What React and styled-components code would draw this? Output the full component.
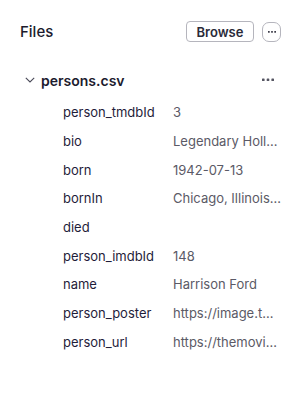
import React from "react";
import styled, { createGlobalStyle } from "styled-components";

const GlobalStyle = createGlobalStyle`
  body {
    margin: 0;
    background: #fff;
    font-family: Inter, "Noto Sans", sans-serif;
    color: #1c1b2e;
  }
`;

const Panel = styled.div`
  width: 303px;
  height: 412px;
  padding: 21px 20px 0 20px;
  box-sizing: border-box;
`;

const Header = styled.div`
  display: flex;
  align-items: center;
  justify-content: space-between;
  height: 21px;
`;

const Title = styled.h2`
  margin: 0;
  font-size: 15px;
  font-weight: 500;
  color: #1c1b2e;
`;

const Actions = styled.div`
  display: flex;
  align-items: center;
  gap: 8px;
  margin-right: 2px;
`;

const Button = styled.button`
  height: 21px;
  width: 68px;
  padding: 0;
  border: 1px solid #b5b5bd;
  border-radius: 4px;
  background: #fff;
  font-family: inherit;
  font-size: 13px;
  font-weight: 600;
  color: #2a2a38;
`;

const IconButton = styled.button`
  width: 19px;
  height: 20px;
  padding: 0;
  border: 1px solid #b5b5bd;
  border-radius: 7px;
  background: #fff;
  display: flex;
  align-items: center;
  justify-content: center;
  color: #2a2a38;
`;

const FileRow = styled.div`
  display: flex;
  align-items: center;
  margin-top: 28px;
  padding-left: 5px;
  height: 20px;
`;

const FileName = styled.span`
  flex: 1;
  margin-left: 6px;
  font-size: 14px;
  font-weight: 600;
  color: #1c1b2e;
`;

const RowMenu = styled.span`
  display: flex;
  margin-right: 9px;
  color: #555562;
`;

const Fields = styled.div`
  margin-top: 8px;
  padding-left: 43px;
  display: flex;
  flex-direction: column;
`;

const Field = styled.div`
  display: grid;
  grid-template-columns: 110px 110px;
  align-items: center;
  height: 28.7px;
  font-size: 13px;
`;

const Key = styled.span`
  color: #1f1d3a;
  white-space: nowrap;
`;

const Value = styled.span`
  color: #5b5a66;
  white-space: nowrap;
  overflow: hidden;
  text-overflow: ellipsis;
`;

const Dots = ({ size = 12 }) => (
  <svg width={size} height="4" viewBox="0 0 12 4" fill="currentColor">
    <rect x="0" y="0.5" width="2.6" height="2.6" rx="0.6" />
    <rect x="4.7" y="0.5" width="2.6" height="2.6" rx="0.6" />
    <rect x="9.4" y="0.5" width="2.6" height="2.6" rx="0.6" />
  </svg>
);

const Chevron = () => (
  <svg width="10" height="6" viewBox="0 0 10 6" fill="none" stroke="#4a4a58" strokeWidth="1.1">
    <path d="M0.8 0.8 L5 5 L9.2 0.8" />
  </svg>
);

const fields = [
  ["person_tmdbId", "3"],
  ["bio", "Legendary Hollywood actor"],
  ["born", "1942-07-13"],
  ["bornIn", "Chicago, Illinois, USA"],
  ["died", ""],
  ["person_imdbId", "148"],
  ["name", "Harrison Ford"],
  ["person_poster", "https://image.tmdb.org/t/p/w440"],
  ["person_url", "https://themoviedb.org/person/3"],
];

export default function App() {
  return (
    <>
      <GlobalStyle />
      <Panel>
        <Header>
          <Title>Files</Title>
          <Actions>
            <Button>Browse</Button>
            <IconButton>
              <Dots size={8} />
            </IconButton>
          </Actions>
        </Header>
        <FileRow>
          <Chevron />
          <FileName>persons.csv</FileName>
          <RowMenu>
            <Dots />
          </RowMenu>
        </FileRow>
        <Fields>
          {fields.map(([k, v]) => (
            <Field key={k}>
              <Key>{k}</Key>
              <Value>{v}</Value>
            </Field>
          ))}
        </Fields>
      </Panel>
    </>
  );
}
